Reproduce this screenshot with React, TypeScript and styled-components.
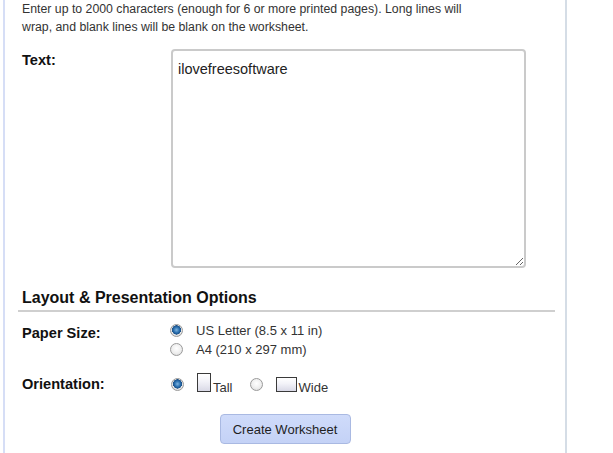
import React from "react";
import styled, { createGlobalStyle } from "styled-components";

const Global = createGlobalStyle`
  html, body { margin: 0; padding: 0; background: #ffffff; }
  body { font-family: "Liberation Sans", Arial, sans-serif; color: #222; }
`;

const Panel = styled.div`
  margin-left: 3px;
  width: 543px;
  min-height: 453px;
  border-left: 2px solid #d6def6;
  border-right: 2px solid #d5dde6;
  padding: 0 0 0 17px;
  box-sizing: content-box;
`;

const Intro = styled.p`
  margin: 0;
  width: 455px;
  font-size: 12.3px;
  line-height: 18px;
  color: #333;
`;

const FormRow = styled.div<{ $top: number }>`
  display: grid;
  grid-template-columns: 149px 1fr;
  margin-top: ${(p) => p.$top}px;
`;

const Label = styled.div<{ $pad: number }>`
  font-size: 14.6px;
  font-weight: bold;
  color: #111;
  line-height: 18px;
  padding-top: ${(p) => p.$pad}px;
`;

const TextArea = styled.textarea`
  width: 355px;
  height: 219px;
  box-sizing: border-box;
  border: 2px solid #cacaca;
  border-radius: 4px;
  padding: 9px 5px;
  font-family: "Liberation Sans", Arial, sans-serif;
  font-size: 14.5px;
  line-height: 18px;
  color: #222;
  outline: none;
  margin: 0;
`;

const Heading = styled.h3`
  margin: 16px 10px 0 -4px;
  padding: 0 0 2px 4px;
  font-size: 16px;
  line-height: 20px;
  font-weight: bold;
  color: #111;
  border-bottom: 2px solid #cfcfcf;
`;

const Options = styled.div`
  display: flex;
  flex-direction: column;
`;

const Option = styled.label`
  display: flex;
  align-items: center;
  height: 19px;
  font-size: 13px;
  color: #333;
  gap: 13px;
  margin-left: -1px;
`;

const InlineOptions = styled.div`
  display: flex;
  align-items: flex-end;
  height: 22px;
  margin-top: -2px;
  font-size: 13px;
  color: #333;
`;

const InlineChoice = styled.label<{ $gapAfter: number }>`
  display: flex;
  align-items: flex-end;
  margin-right: ${(p) => p.$gapAfter}px;
`;

const Radio = styled.input.attrs({ type: "radio" })`
  appearance: none;
  -webkit-appearance: none;
  width: 13px;
  height: 13px;
  margin: 0;
  border-radius: 50%;
  border: 1px solid #9a9a9a;
  box-sizing: border-box;
  background: radial-gradient(circle at 50% 40%, #ffffff 0%, #eeeeee 55%, #d4d4d4 100%);
  flex: none;
  &:checked {
    background:
      radial-gradient(circle at 50% 45%, #7fb4e0 0%, #2a6fae 35%, #1b4f86 55%, rgba(0,0,0,0) 58%),
      radial-gradient(circle at 50% 40%, #ffffff 0%, #e8e8e8 60%, #cfcfcf 100%);
  }
`;

const InlineRadio = styled(Radio)<{ $after: number }>`
  margin-bottom: 1px;
  margin-right: ${(p) => p.$after}px;
`;

const PaperIcon = styled.span<{ $w: number; $h: number }>`
  display: inline-block;
  width: ${(p) => p.$w}px;
  height: ${(p) => p.$h}px;
  box-sizing: border-box;
  border: 1px solid #3a3a3a;
  background: linear-gradient(to bottom, #ffffff 0%, #f2f2f8 45%, #d9d9e6 100%);
  margin-right: 2px;
`;

const ChoiceText = styled.span`
  line-height: 14px;
  margin-bottom: -3px;
`;

const ButtonRow = styled.div`
  display: flex;
  justify-content: center;
  padding-right: 17px;
  margin-top: 21px;
`;

const Button = styled.button`
  width: 131px;
  height: 30px;
  border: 1px solid #a9b9e2;
  border-radius: 4px;
  background: linear-gradient(to bottom, #cfdbfa 0%, #c4d2f6 100%);
  font-family: "Liberation Sans", Arial, sans-serif;
  font-size: 13px;
  color: #1e1e1e;
  padding: 0;
  cursor: pointer;
`;

export default function App() {
  return (
    <>
      <Global />
      <Panel>
        <Intro>
          Enter up to 2000 characters (enough for 6 or more printed pages). Long lines will
          wrap, and blank lines will be blank on the worksheet.
        </Intro>
        <FormRow $top={13}>
          <Label $pad={2}>Text:</Label>
          <div>
            <TextArea defaultValue="ilovefreesoftware" />
          </div>
        </FormRow>
        <Heading>Layout &amp; Presentation Options</Heading>
        <FormRow $top={9}>
          <Label $pad={3}>Paper Size:</Label>
          <Options>
            <Option>
              <Radio name="paper" defaultChecked />
              US Letter (8.5 x 11 in)
            </Option>
            <Option>
              <Radio name="paper" />
              A4 (210 x 297 mm)
            </Option>
          </Options>
        </FormRow>
        <FormRow $top={13}>
          <Label $pad={3}>Orientation:</Label>
          <InlineOptions>
            <InlineChoice $gapAfter={17}>
              <InlineRadio name="orient" defaultChecked $after={13} />
              <PaperIcon $w={14} $h={19} />
              <ChoiceText>Tall</ChoiceText>
            </InlineChoice>
            <InlineChoice $gapAfter={0}>
              <InlineRadio name="orient" $after={13} />
              <PaperIcon $w={21} $h={15} />
              <ChoiceText>Wide</ChoiceText>
            </InlineChoice>
          </InlineOptions>
        </FormRow>
        <ButtonRow>
          <Button>Create Worksheet</Button>
        </ButtonRow>
      </Panel>
    </>
  );
}
